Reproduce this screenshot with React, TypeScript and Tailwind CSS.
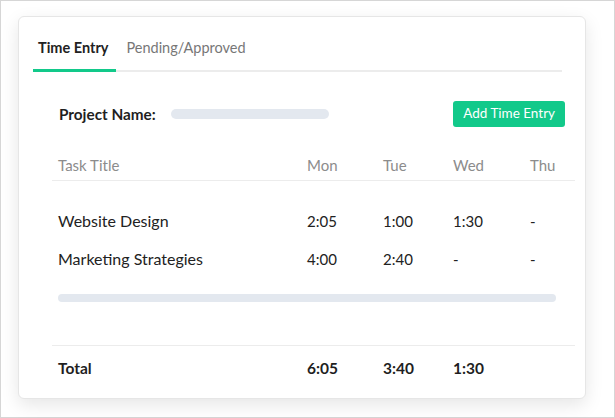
import React from 'react';

type Row = { title: string; mon: string; tue: string; wed: string; thu: string };

const ROWS: Row[] = [
  { title: 'Website Design', mon: '2:05', tue: '1:00', wed: '1:30', thu: '-' },
  { title: 'Marketing Strategies', mon: '4:00', tue: '2:40', wed: '-', thu: '-' },
];

const GRID = 'grid grid-cols-[255px_76px_70px_77px_1fr]';

export default function App() {
  return (
    <div
      className="w-[615px] h-[418px] border border-[#d6d6d6] bg-white pl-[17px] pt-[15px]"
      style={{ fontFamily: 'Lato, "Open Sans", sans-serif' }}
    >
      <div className="w-[568px] h-[383px] rounded-md border border-[#e6e6e6] bg-white shadow-[0_6px_18px_rgba(0,0,0,0.1)] flex flex-col">
        {/* tabs */}
        <div className="ml-[14px] mt-[21px] w-[529px] flex border-b-2 border-[#ececec]">
          <div className="pl-[5px] pr-[8px] pb-[11px] -mb-[2px] border-b-[3px] border-[#12c98a] text-[14.5px] leading-[20px] font-bold text-[#222]">
            Time Entry
          </div>
          <div className="ml-[10px] pb-[11px] text-[14.5px] leading-[20px] text-[#777]">
            Pending/Approved
          </div>
        </div>

        {/* project row */}
        <div className="mt-[29px] ml-[40px] w-[506px] flex items-center">
          <span className="text-[15.3px] font-bold text-[#1f1f1f]">Project Name:</span>
          <div className="ml-[15px] w-[158px] h-[10px] rounded-full bg-[#e3e8ef]" />
          <button className="ml-auto h-[26px] px-[10px] rounded-[3px] bg-[#12c98a] text-white text-[13.5px] leading-none">
            Add Time Entry
          </button>
        </div>

        {/* table */}
        <div className="ml-[33px] w-[523px] mt-[28px]">
          <div className={`${GRID} border-b border-[#ececec] pb-[5px] text-[15px] leading-[20px] text-[#8c8c8c]`}>
            <span className="pl-[6px]">Task Title</span>
            <span>Mon</span>
            <span>Tue</span>
            <span>Wed</span>
            <span>Thu</span>
          </div>
          <div className="pt-[21px]">
            {ROWS.map((r) => (
              <div key={r.title} className={`${GRID} h-[38px] items-center text-[15px] leading-[20px] text-[#222]`}>
                <span className="pl-[6px] text-[16px]">{r.title}</span>
                <span>{r.mon}</span>
                <span>{r.tue}</span>
                <span>{r.wed}</span>
                <span>{r.thu}</span>
              </div>
            ))}
          </div>
          <div className="mt-[16px] ml-[6px] w-[498px] h-[8px] rounded-full bg-[#e3e8ef]" />
          <div className={`${GRID} mt-[43px] border-t border-[#ececec] pt-[12px] text-[15.5px] leading-[20px] font-bold text-[#1f1f1f]`}>
            <span className="pl-[6px]">Total</span>
            <span>6:05</span>
            <span>3:40</span>
            <span>1:30</span>
            <span />
          </div>
        </div>
      </div>
    </div>
  );
}
